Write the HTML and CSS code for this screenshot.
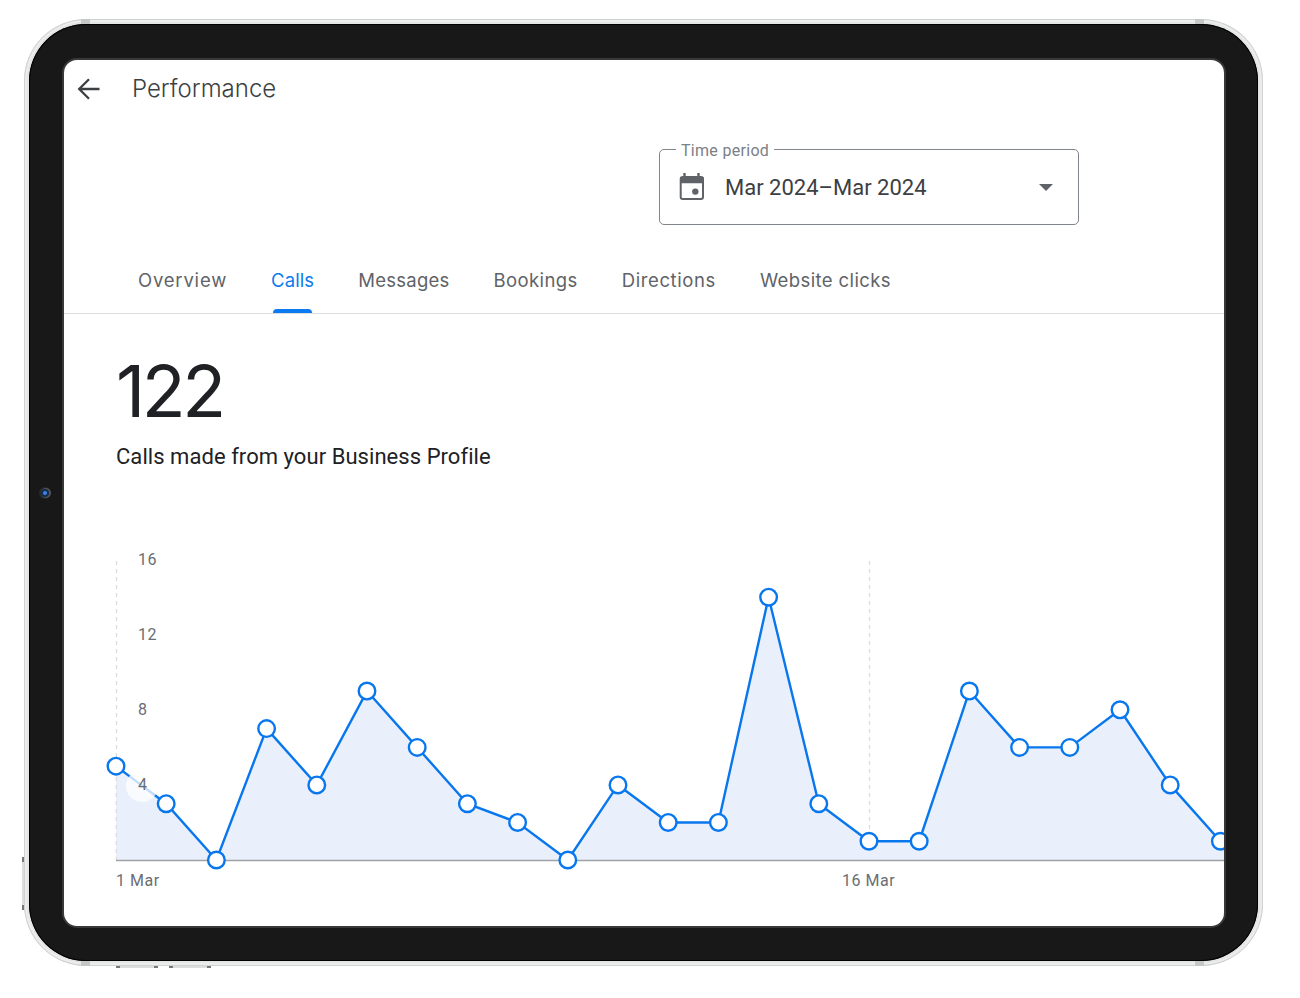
FILE: index.html
```html
<!DOCTYPE html>
<html lang="en">
<head>
    <meta charset="UTF-8">
    <meta name="viewport" content="width=device-width, initial-scale=1.0">
    <title>Performance</title>
    <link rel="stylesheet" href="styles.css">
</head>
<body>
    <div class="tablet">
        <span class="band band-top band-left"></span>
        <span class="band band-top band-right"></span>
        <span class="band band-bottom band-left"></span>
        <span class="band band-bottom band-right"></span>
        <span class="side-button"></span>
        <span class="volume volume-up"></span>
        <span class="volume volume-down"></span>
        <div class="bezel">
            <span class="camera"></span>
            <main class="screen">
                <header class="header">
                    <svg class="back" width="24" height="24" viewBox="0 0 24 24">
                        <path d="M22.5 12H2.5M12 2.2L2.2 12l9.8 9.8" fill="none" stroke="#3c4043" stroke-width="2.3"/>
                    </svg>
                    <h1 class="title">Performance</h1>
                </header>
                <div class="period">
                    <span class="period-label">Time period</span>
                    <svg class="calendar" width="26" height="28" viewBox="0 0 26 28">
                        <path d="M5.5 0v4M19.5 0v4" stroke="#5f6368" stroke-width="2.4"/>
                        <rect x="1.7" y="4" width="22.3" height="22" rx="2" fill="none" stroke="#5f6368" stroke-width="2"/>
                        <path d="M1 4h23.6v6.3H1z" fill="#5f6368"/>
                        <circle cx="16.3" cy="18.6" r="3.2" fill="#5f6368"/>
                    </svg>
                    <span class="period-value">Mar 2024–Mar 2024</span>
                    <span class="arrow"></span>
                </div>
                <nav class="tabs">
                    <a class="tab overview">Overview</a>
                    <a class="tab calls active">Calls</a>
                    <a class="tab messages">Messages</a>
                    <a class="tab bookings">Bookings</a>
                    <a class="tab directions">Directions</a>
                    <a class="tab website">Website clicks</a>
                </nav>
                <section class="summary">
                    <div class="count">122</div>
                    <div class="caption">Calls made from your Business Profile</div>
                </section>
                <svg class="chart" id="chart" width="1160" height="386" viewBox="0 0 1160 386">
                    <path class="grid" d="M52.5 21v299M805.5 21v299"/>
                    <path class="area" id="area"/>
                    <path class="grid" d="M52.5 229v91"/>
                    <path class="axis" d="M52 320.5h1108"/>
                    <path class="line" id="line"/>
                    <circle class="halo" cx="78" cy="246" r="16"/>
                    <g id="points"></g>
                    <g class="labels">
                        <text x="74" y="25">16</text>
                        <text x="74" y="100">12</text>
                        <text x="74" y="175">8</text>
                        <text x="74" y="250">4</text>
                        <text class="date" x="52" y="346">1 Mar</text>
                        <text class="date" x="778" y="346">16 Mar</text>
                    </g>
                </svg>
            </main>
        </div>
    </div>
    <script src="script.js"></script>
</body>
</html>
```
FILE: styles.css
```css
body {
    box-sizing: border-box;
    height: 998px;
    margin: 0;
    padding: 19px 0 0 24px;
    background-color: #fff;
    font-family: Roboto, sans-serif;
    overflow: hidden;
}
.tablet {
    position: relative;
    box-sizing: border-box;
    width: 1239px;
    height: 947px;
    padding: 5px;
    border-radius: 62px;
    background-color: #e4e6e6;
    box-shadow: inset 0 0 0 1px #d0d1d1, inset 0 0 0 3px #ececec;
}
.bezel {
    position: relative;
    box-sizing: border-box;
    width: 1229px;
    height: 937px;
    padding: 36px 34px 35px 35px;
    border-radius: 57px;
    background-color: #181818;
    box-shadow: inset 0 0 0 1px #000;
}
.screen {
    width: 1160px;
    height: 866px;
    border-radius: 13px;
    background-color: #fff;
    box-shadow: 0 0 0 2px #39393a;
    overflow: hidden;
}
.camera {
    position: absolute;
    left: 12px;
    top: 465px;
    width: 4px;
    height: 4px;
    border: 2px solid #152c4d;
    border-radius: 50%;
    background-color: #3b86e8;
    box-shadow: 1px 0 0 1px #555, 0 0 0 2px #292929;
}
.band {
    position: absolute;
    width: 9px;
    height: 5px;
    background-color: #c5c6c6;
}
.band-top {
    top: 0;
}
.band-bottom {
    bottom: 0;
}
.band-left {
    left: 57px;
}
.band-right {
    right: 59px;
}
.side-button {
    position: absolute;
    left: -2px;
    top: 838px;
    width: 2px;
    height: 43px;
    border-top: 5px solid #777;
    border-bottom: 5px solid #777;
    background-color: #ddd;
}
.volume {
    position: absolute;
    top: 947px;
    height: 2px;
    width: 34px;
    border-left: 4px solid #777;
    border-right: 4px solid #777;
    background-color: #ddd;
}
.volume-up {
    left: 92px;
}
.volume-down {
    left: 145px;
}
.header {
    display: flex;
    align-items: center;
    height: 58px;
    padding-left: 13px;
}
.title {
    margin: -1px 0 0 31px;
    font-family: Inter, sans-serif;
    font-size: 24px;
    font-weight: 300;
    color: #3c4043;
}
.period {
    position: relative;
    display: flex;
    align-items: center;
    box-sizing: border-box;
    width: 420px;
    height: 76px;
    margin: 31px 0 0 595px;
    padding: 0 25px 0 19px;
    border: 1px solid #80868b;
    border-radius: 5px;
}
.period-label {
    position: absolute;
    left: 16px;
    top: -9px;
    padding: 0 5px;
    background-color: #fff;
    font-size: 16px;
    line-height: 20px;
    letter-spacing: 0.3px;
    color: #7b8085;
}
.period-value {
    margin: 1px 0 0 20px;
    font-size: 22px;
    letter-spacing: 0;
    color: #3c4043;
}
.arrow {
    margin-left: auto;
    border: 7px solid transparent;
    border-top-color: #5f6368;
    border-bottom: 0;
}
.tabs {
    display: flex;
    gap: 44px;
    box-sizing: border-box;
    height: 89px;
    padding: 43px 0 0 74px;
    border-bottom: 1px solid #dadce0;
}
.tab {
    position: relative;
    font-family: Inter, sans-serif;
    font-size: 18.5px;
    line-height: 24px;
    letter-spacing: 0.4px;
    color: #5f6368;
}
.tab.overview {
    letter-spacing: 0.8px;
}
.tab.calls {
    letter-spacing: 0.1px;
}
.tab.messages {
    letter-spacing: 0.25px;
}
.tab.directions {
    letter-spacing: 0.6px;
}
.tab.active {
    color: #0b79f0;
}
.tab.active::after {
    content: "";
    position: absolute;
    left: 2px;
    right: 2px;
    bottom: 0;
    height: 4px;
    border-radius: 4px 4px 0 0;
    background-color: #0b79f0;
}
.summary {
    box-sizing: border-box;
    height: 226px;
    padding: 37px 0 0 52px;
    color: #202124;
}
.count {
    font-family: Inter, sans-serif;
    font-size: 72px;
    line-height: 80px;
    letter-spacing: -3.5px;
}
.caption {
    margin-top: 12px;
    font-size: 22px;
    line-height: 28px;
    letter-spacing: 0.05px;
}
.chart {
    display: block;
}
.grid {
    fill: none;
    stroke: #dadce0;
    stroke-width: 1.3;
    stroke-dasharray: 4 4;
}
.axis {
    stroke: #a0a2a5;
    stroke-width: 1.5;
}
.area {
    fill: #e9f0fc;
}
.line {
    fill: none;
    stroke: #0877ee;
    stroke-width: 2.4;
}
.halo {
    fill: #fff;
    fill-opacity: 0.75;
}
.point {
    fill: #fff;
    stroke: #0877ee;
    stroke-width: 2.4;
}
.labels {
    font-size: 16px;
    letter-spacing: 0.5px;
    fill: #6a6e73;
}
```
FILE: script.js
```js
const calls = [5, 3, 0, 7, 4, 9, 6, 3, 2, 0, 4, 2, 2, 14, 3, 1, 1, 9, 6, 6, 8, 4, 1];
const left = 52;
const base = 320;
const step = 50.2;
const unit = 18.77;
const right = 1160;

const coords = calls.map((value, i) => [left + i * step, base - value * unit]);
const path = 'M' + coords.map(point => point.join(' ')).join('L');

document.getElementById('line').setAttribute('d', path);
document.getElementById('area').setAttribute('d', path + `H${right}V${base}H${left}Z`);

const points = document.getElementById('points');
coords.forEach(([x, y]) => {
    const circle = document.createElementNS('http://www.w3.org/2000/svg', 'circle');
    circle.setAttribute('class', 'point');
    circle.setAttribute('cx', x);
    circle.setAttribute('cy', y);
    circle.setAttribute('r', 8.3);
    points.appendChild(circle);
});
```
